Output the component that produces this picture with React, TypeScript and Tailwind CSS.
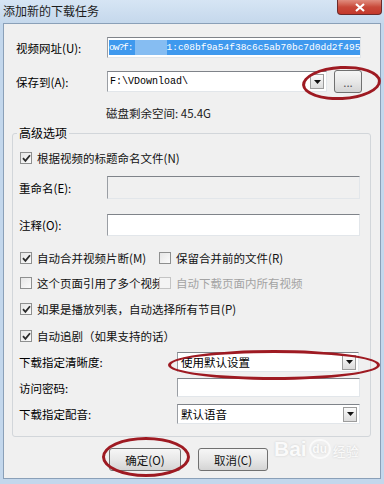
import React from 'react'

const cjk = "font-['Noto_Sans_CJK_SC','Microsoft_YaHei',sans-serif]"

function TextBox({ className = '', children }: { className?: string; children?: React.ReactNode }) {
  return (
    <div
      className={`flex items-center overflow-hidden border border-t-[#7f8389] border-l-[#9a9ea4] border-r-[#e2e6ea] border-b-[#e2e6ea] ${className}`}
    >
      {children}
    </div>
  )
}

function DropArrow() {
  return (
    <div className="ml-auto mr-[2px] flex h-[15px] w-[14px] shrink-0 items-center justify-center border border-[#9c9c9c] bg-gradient-to-b from-[#fbfbfb] to-[#dcdcdc]">
      <svg width="7" height="4" viewBox="0 0 7 4">
        <path d="M0 0h7L3.5 4z" fill="#111" />
      </svg>
    </div>
  )
}

function Check({ checked, disabled }: { checked?: boolean; disabled?: boolean }) {
  return (
    <div
      className={`flex h-[12px] w-[12px] shrink-0 items-center justify-center border ${
        disabled ? 'border-[#c4c4c4] bg-[#f4f4f4]' : 'border-[#8e8f8f] bg-gradient-to-br from-[#e6e6e6] to-[#fbfbfb]'
      }`}
    >
      {checked && (
        <svg width="9" height="9" viewBox="0 0 9 9">
          <path d="M1 4.2l2.4 2.6L8 1.2" fill="none" stroke="#2b2b2b" strokeWidth="1.8" />
        </svg>
      )}
    </div>
  )
}

function CheckRow({ label, checked, disabled, width }: { label: string; checked?: boolean; disabled?: boolean; width?: string }) {
  return (
    <div className={`flex h-[18px] items-center gap-[5px] ${width ? `${width} overflow-hidden` : ''}`}>
      <Check checked={checked} disabled={disabled} />
      <span className={`whitespace-nowrap leading-[16px] ${disabled ? 'text-[#a3a3a3]' : 'text-[#111]'}`}>{label}</span>
    </div>
  )
}

function Button({ label, className = '' }: { label: string; className?: string }) {
  return (
    <div
      className={`flex h-[23px] items-center justify-center rounded-[3px] border border-[#707070] bg-gradient-to-b from-[#f6f6f6] via-[#e8e8e8] to-[#d4d4d4] text-[11.5px] leading-[16px] text-[#111] ${className}`}
    >
      {label}
    </div>
  )
}

export default function App() {
  return (
    <div className={`relative h-[484px] w-[384px] overflow-hidden bg-[#c3d7ec] ${cjk} text-[11.5px] leading-[16px]`}>
      {/* Title bar */}
      <div className="flex h-[23px] items-start bg-gradient-to-b from-[#d6e5f4] to-[#c5d8ec]">
        <span className="mt-[3px] pl-[3px] text-[12px] text-[#1c1c1c]">添加新的下载任务</span>
        <div className="ml-auto mr-[2px] flex h-[15px] w-[45px] items-center justify-center rounded-b-[4px] border border-t-0 border-[#6b2a2a] bg-gradient-to-b from-[#e08c7e] via-[#c8493a] to-[#c4382b]">
          <svg width="10" height="9" viewBox="0 0 10 9">
            <path d="M1 1l8 7M9 1L1 8" stroke="#fff" strokeWidth="2.2" />
          </svg>
        </div>
      </div>

      {/* Client area */}
      <div className="mx-[3px] h-[456px] border border-[#8aa0b8] bg-[#f0f0f0] pl-[12px]">
        <div className="mt-[13px] flex h-[21px] items-center">
          <span className="w-[91px]">视频网址(U):</span>
          <TextBox className="h-[21px] w-[254px] bg-white px-[1px]">
            <span className="flex h-[15px] items-center whitespace-nowrap bg-[#3f99ee] font-['Liberation_Mono',monospace] text-[9.5px] leading-[15px] text-white">
              <span className="tracking-[-1px]">ow?f:</span>
              <span className="ml-[2px] inline-block h-[15px] w-[32px] bg-[#86bdf2]" />
              1:c08bf9a54f38c6c5ab70bc7d0dd2f495
            </span>
          </TextBox>
        </div>

        <div className="mt-[13px] flex h-[21px] items-center">
          <span className="w-[91px]">保存到(A):</span>
          <TextBox className="h-[21px] w-[220px] bg-white pl-[2px]">
            <span className="font-['Liberation_Mono',monospace] text-[10px] text-black">F:\VDownload\</span>
            <DropArrow />
          </TextBox>
          <Button label="..." className="ml-[7px] h-[19px] w-[28px] rounded-[2px] text-[#555]" />
        </div>

        <div className="mt-[12px] flex h-[18px] items-center pl-[90px] text-[#222]">磁盘剩余空间: 45.4G</div>

        {/* Advanced options group */}
        <div className="mt-[11px] ml-[-4px] flex h-[304px] w-[359px] flex-col rounded-[3px] border border-[#d2d6da]">
          <span className="mt-[-10px] ml-[4px] flex h-[18px] w-fit items-center bg-[#f0f0f0] px-[2px] text-[12px]">高级选项</span>

          <div className="mt-[7px] pl-[7px]">
            <CheckRow label="根据视频的标题命名文件(N)" checked />
          </div>

          <div className="mt-[9px] flex h-[23px] items-center pl-[6px]">
            <span className="w-[88px]">重命名(E):</span>
            <TextBox className="h-[23px] w-[253px] bg-[#f0f0f0]" />
          </div>

          <div className="mt-[15px] flex h-[22px] items-center pl-[6px]">
            <span className="w-[88px]">注释(O):</span>
            <TextBox className="h-[22px] w-[253px] bg-white" />
          </div>

          <div className="mt-[13px] flex pl-[7px]">
            <CheckRow label="自动合并视频片断(M)" checked width="w-[139px]" />
            <CheckRow label="保留合并前的文件(R)" />
          </div>

          <div className="mt-[7px] flex pl-[7px]">
            <CheckRow label="这个页面引用了多个视频，" width="w-[139px]" />
            <CheckRow label="自动下载页面内所有视频" disabled />
          </div>

          <div className="mt-[8px] pl-[7px]">
            <CheckRow label="如果是播放列表，自动选择所有节目(P)" checked />
          </div>

          <div className="mt-[9px] pl-[7px]">
            <CheckRow label="自动追剧（如果支持的话）" checked />
          </div>

          <div className="mt-[7px] flex h-[20px] items-center pl-[6px]">
            <span className="w-[158px]">下载指定清晰度:</span>
            <TextBox className="h-[20px] w-[182px] bg-white pl-[3px]">
              <span>使用默认设置</span>
              <DropArrow />
            </TextBox>
          </div>

          <div className="mt-[6px] flex h-[19px] items-center pl-[6px]">
            <span className="w-[158px]">访问密码:</span>
            <TextBox className="h-[19px] w-[183px] bg-white" />
          </div>

          <div className="mt-[7px] flex h-[20px] items-center pl-[6px]">
            <span className="w-[158px]">下载指定配音:</span>
            <TextBox className="h-[20px] w-[183px] bg-white pl-[3px]">
              <span>默认语音</span>
              <DropArrow />
            </TextBox>
          </div>
        </div>

        <div className="mt-[11px] flex pl-[93px]">
          <Button label="确定(O)" className="w-[72px]" />
          <Button label="取消(C)" className="ml-[17px] w-[70px]" />
        </div>
      </div>

      {/* Baidu watermark */}
      <div className="pointer-events-none absolute left-[274px] top-[438px] flex items-end gap-[2px] text-white opacity-70">
        <span className="font-['Liberation_Sans',sans-serif] text-[21px] font-bold leading-none [text-shadow:0_0_2px_#bbb]">Bai</span>
        <span className="flex h-[20px] w-[22px] items-center justify-center rounded-full border-2 border-white font-['Liberation_Sans',sans-serif] text-[12px] font-bold leading-none [text-shadow:0_0_2px_#bbb]">du</span>
        <span className="pb-[2px] text-[13px] leading-none [text-shadow:0_0_2px_#bbb]">经验</span>
      </div>

      {/* Red annotation ellipses */}
      <div className="pointer-events-none absolute left-[302px] top-[66px] h-[34px] w-[79px] -rotate-3 rounded-[50%] border-[3px] border-[#9e1a22]" />
      <div className="pointer-events-none absolute left-[168px] top-[350px] h-[30px] w-[212px] rounded-[50%] border-[3px] border-[#9e1a22]" />
      <div className="pointer-events-none absolute left-[102px] top-[437px] h-[40px] w-[88px] rounded-[50%] border-[3px] border-[#9e1a22]" />
    </div>
  )
}
